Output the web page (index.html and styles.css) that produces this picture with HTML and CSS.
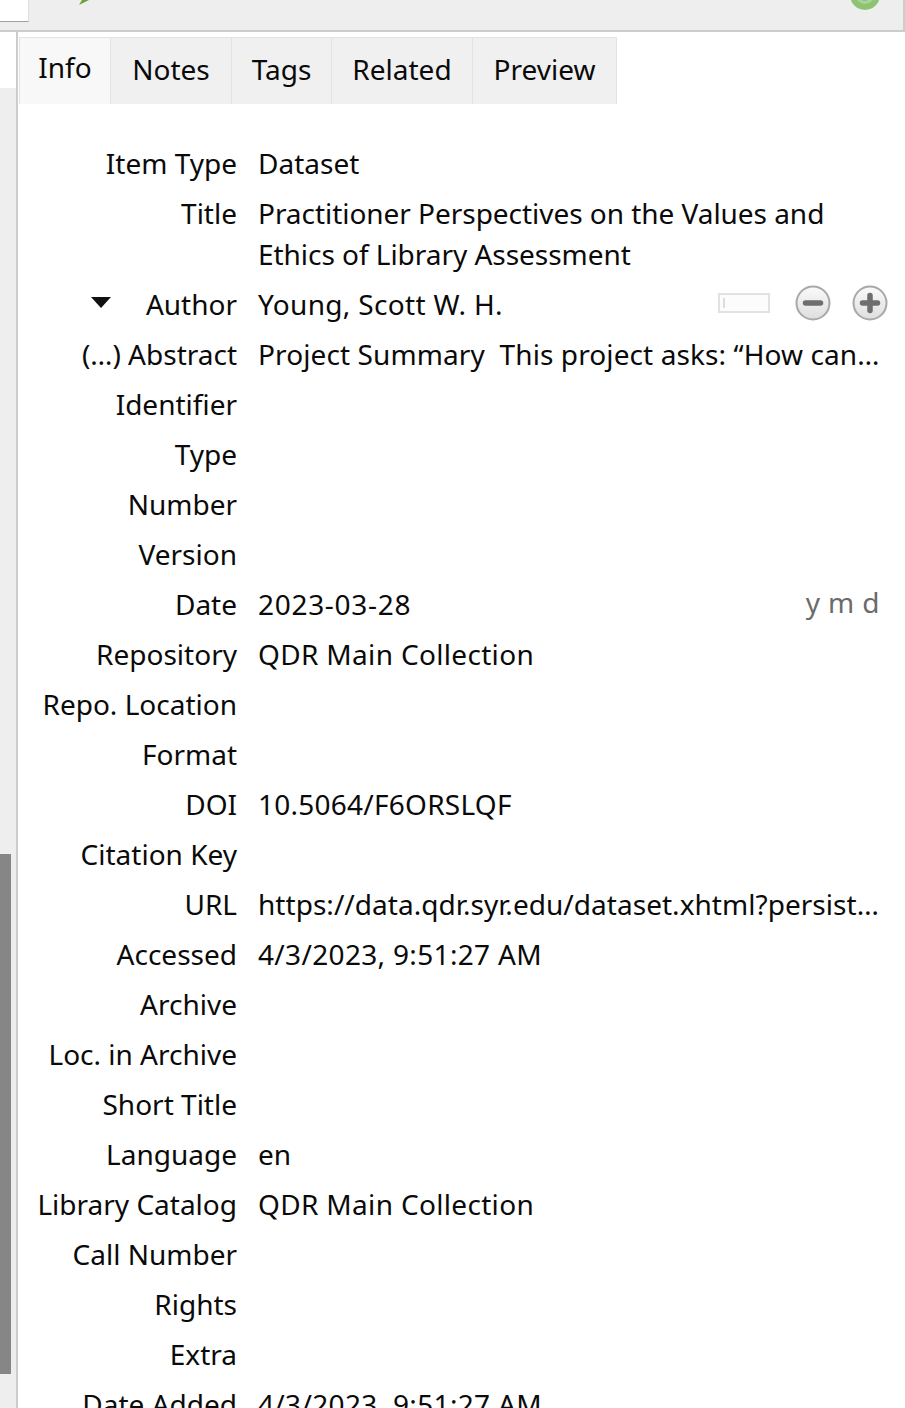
FILE: index.html
```html
<!DOCTYPE html>
<html lang="en">
<head>
  <meta charset="UTF-8" />
  <title>Item details</title>
  <link rel="stylesheet" href="styles.css">
</head>
<body>
  <div class="toolbar">
    <div class="search-box"></div>
    <svg class="tool-check" width="12" height="5" viewBox="0 0 12 5"><path d="M0 5 L6 2 L10 0 L3 0 Z" fill="#6aa03c"/></svg>
    <svg class="tool-sync" width="32" height="11" viewBox="0 0 32 11"><circle cx="16" cy="-5" r="15" fill="#8cc474"/><circle cx="16" cy="-5" r="9" fill="#a9d49a"/><circle cx="16" cy="-5" r="6" fill="#8cc474"/></svg>
  </div>

  <div class="main">
    <div class="side">
      <div class="side-top"></div>
      <div class="side-rest">
        <div class="thumb"></div>
      </div>
    </div>

    <div class="pane">
      <div class="tabs">
        <div class="tab active">Info</div>
        <div class="tab">Notes</div>
        <div class="tab">Tags</div>
        <div class="tab">Related</div>
        <div class="tab">Preview</div>
      </div>

      <div class="fields">
        <div class="label">Item Type</div>
        <div class="value">Dataset</div>

        <div class="label label-top">Title</div>
        <div class="value title">Practitioner Perspectives on the Values and Ethics of Library Assessment</div>

        <div class="label"><span class="twisty"></span>Author</div>
        <div class="value split">
          <span class="spaced">Young, Scott W. H.</span>
          <span class="creator-btns">
            <svg class="mode-toggle" width="53" height="20" viewBox="0 0 53 20">
              <rect x="1" y="1" width="50" height="18" fill="#fcfcfc" stroke="#e2e2e2" stroke-width="2"/>
              <rect x="5" y="5" width="2" height="10" fill="#dcdcdc"/>
            </svg>
            <svg width="36" height="36" viewBox="0 0 36 36">
              <defs>
                <linearGradient id="btnFill" x1="0" y1="0" x2="0" y2="1">
                  <stop offset="0" stop-color="#fafafa"/>
                  <stop offset="1" stop-color="#dedede"/>
                </linearGradient>
              </defs>
              <circle cx="18" cy="18" r="16.5" fill="url(#btnFill)" stroke="#a8a8a8" stroke-width="2"/>
              <path d="M10.5 18 H25.5" stroke="#6e6e6e" stroke-width="5.5" stroke-linecap="round"/>
            </svg>
            <svg width="36" height="36" viewBox="0 0 36 36">
              <circle cx="18" cy="18" r="16.5" fill="url(#btnFill)" stroke="#a8a8a8" stroke-width="2"/>
              <path d="M10.5 18 H25.5 M18 10.5 V25.5" stroke="#6e6e6e" stroke-width="5.5" stroke-linecap="round"/>
            </svg>
          </span>
        </div>

        <div class="label">(…) Abstract</div>
        <div class="value keep abstract">Project Summary  This project asks: “How can…</div>

        <div class="label">Identifier</div>
        <div class="value"></div>

        <div class="label">Type</div>
        <div class="value"></div>

        <div class="label">Number</div>
        <div class="value"></div>

        <div class="label">Version</div>
        <div class="value"></div>

        <div class="label">Date</div>
        <div class="value split">
          <span class="date-text">2023-03-28</span>
          <span class="ymd">y m d</span>
        </div>

        <div class="label">Repository</div>
        <div class="value spaced">QDR Main Collection</div>

        <div class="label">Repo. Location</div>
        <div class="value"></div>

        <div class="label">Format</div>
        <div class="value"></div>

        <div class="label">DOI</div>
        <div class="value doi">10.5064/F6ORSLQF</div>

        <div class="label">Citation Key</div>
        <div class="value"></div>

        <div class="label">URL</div>
        <div class="value keep url">https://data.qdr.syr.edu/dataset.xhtml?persist…</div>

        <div class="label">Accessed</div>
        <div class="value spaced">4/3/2023, 9:51:27 AM</div>

        <div class="label">Archive</div>
        <div class="value"></div>

        <div class="label">Loc. in Archive</div>
        <div class="value"></div>

        <div class="label">Short Title</div>
        <div class="value"></div>

        <div class="label">Language</div>
        <div class="value">en</div>

        <div class="label">Library Catalog</div>
        <div class="value spaced">QDR Main Collection</div>

        <div class="label">Call Number</div>
        <div class="value"></div>

        <div class="label">Rights</div>
        <div class="value"></div>

        <div class="label">Extra</div>
        <div class="value"></div>

        <div class="label">Date Added</div>
        <div class="value spaced">4/3/2023, 9:51:27 AM</div>
      </div>
    </div>
  </div>
</body>
</html>
```

FILE: styles.css
```css
* {
  box-sizing: border-box;
}

html, body {
  height: 100%;
}

body {
  margin: 0;
  display: flex;
  flex-direction: column;
  overflow: hidden;
  background: #fff;
  color: #0a0a0a;
  font-family: "Noto Sans", "Open Sans", sans-serif;
  font-size: 28px;
}

/* top toolbar, cut off by the screenshot */
.toolbar {
  height: 32px;
  flex: none;
  display: flex;
  align-items: flex-start;
  background: #eeeeee;
  border-bottom: 2px solid #cccccc;
  border-right: 2px solid #cccccc;
}

.search-box {
  width: 29px;
  height: 22px;
  background: #fff;
  border-bottom: 1px solid #a0a0a0;
  border-right: 1px solid #e0e0e0;
}

.tool-check {
  margin-left: 50px;
}

.tool-sync {
  margin-left: auto;
  margin-right: 22px;
}

.main {
  flex: 1;
  display: flex;
  min-height: 0;
}

.side {
  width: 18px;
  flex: none;
  display: flex;
  flex-direction: column;
  border-right: 2px solid #cccccc;
}

.side-top {
  height: 56px;
  background: #fff;
}

.side-rest {
  flex: 1;
  background: #eeeeee;
  padding-top: 766px;
}

.thumb {
  width: 11px;
  height: 520px;
  background: #868686;
}

.pane {
  flex: 1;
  min-width: 0;
  padding: 5px 0 0 1px;
}

.tabs {
  display: grid;
  grid-template-columns: 92px 121px 100px 141px 144px;
  width: max-content;
  height: 67px;
}

.tab {
  padding-top: 12px;
  text-align: center;
  background: #f0f0f0;
  border: 1px solid #e3e3e3;
  border-bottom: none;
  border-left: none;
}

.tab.active {
  padding-top: 10px;
  background: #f8f8f8;
  border-left: 1px solid #e3e3e3;
}

.fields {
  display: grid;
  grid-template-columns: 218px 1fr;
  column-gap: 21px;
  padding: 35px 25px 0 0;
}

.label,
.value {
  min-height: 50px;
  padding-bottom: 2px;
  line-height: 48px;
}

.label {
  display: flex;
  justify-content: flex-end;
  align-items: center;
  white-space: nowrap;
}

.label-top {
  align-items: flex-start;
}

.value {
  min-width: 0;
  white-space: nowrap;
}

.keep {
  white-space: pre;
}

/* Segoe-style digits and caps run a bit wider */
.spaced {
  letter-spacing: 0.33px;
}

.date-text {
  letter-spacing: 0.7px;
}

.doi {
  letter-spacing: 0.25px;
}

.abstract {
  letter-spacing: 0.1px;
}

.url {
  letter-spacing: 0.04px;
}

.title {
  white-space: normal;
  line-height: 41px;
  padding: 4px 40px 5px 0;
  letter-spacing: -0.04px;
}

.split {
  display: flex;
  justify-content: space-between;
  align-items: center;
  height: 50px;
}

.twisty {
  width: 0;
  height: 0;
  margin-right: 35px;
  margin-bottom: 3px;
  border-left: 10px solid transparent;
  border-right: 10px solid transparent;
  border-top: 11px solid #111;
}

.creator-btns {
  display: flex;
  align-items: center;
  gap: 21px;
  margin-right: -8px;
  margin-bottom: 2px;
}

.mode-toggle {
  margin-right: 3px;
}

.ymd {
  color: #6b6b6b;
  letter-spacing: 0.4px;
  margin-bottom: 4px;
}
```
